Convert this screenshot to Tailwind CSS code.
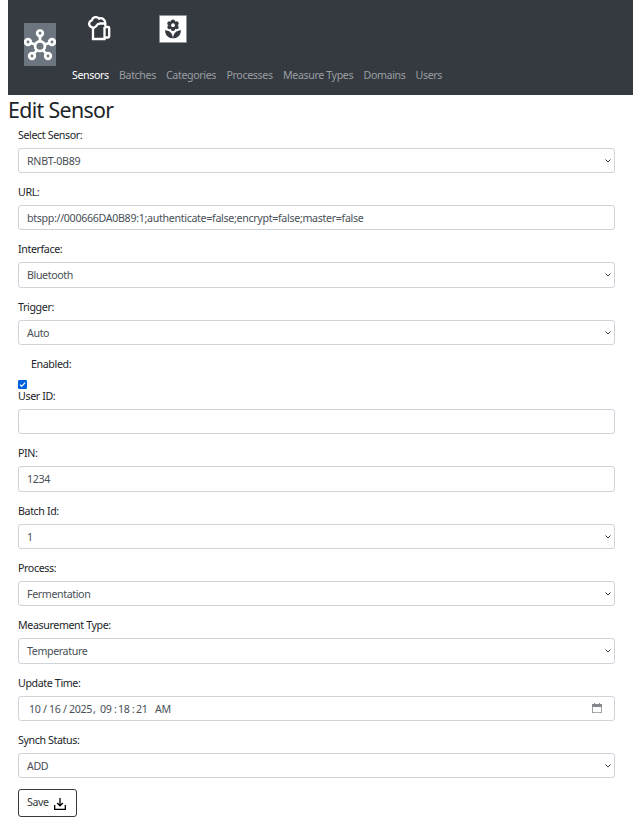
<!DOCTYPE html>
<html lang="en">
<head>
<meta charset="utf-8">
<title>Edit Sensor</title>
<script src="https://cdn.jsdelivr.net/npm/@tailwindcss/browser@4"></script>
</head>
<body class="h-[837px] overflow-hidden bg-white pl-2 font-['Noto_Sans',sans-serif] text-[10.67px] leading-4 tracking-[-0.38px] text-[#212529]">
<header class="flex h-[95px] bg-[#343a40] pl-4">
  <a class="mt-[23px] flex h-[43px] w-8 items-center justify-center bg-[#6c757d]">
    <svg class="h-8 w-8" viewBox="0 0 32 32" fill="none" stroke="#fff" stroke-width="2.7">
      <circle cx="16" cy="17.2" r="4.9"/>
      <circle cx="16" cy="4.3" r="2.8"/><circle cx="4" cy="13" r="2.8"/><circle cx="28" cy="13" r="2.8"/><circle cx="8" cy="27" r="2.8"/><circle cx="24" cy="27" r="2.8"/>
      <path d="M16 7.1v5.2M6.7 13.9l4.8 1.7M25.3 13.9l-4.8 1.7M9.8 24.7l3.3-3.6M22.2 24.7l-3.3-3.6"/>
    </svg>
  </a>
  <div class="ml-4 flex flex-col">
    <div class="flex h-[67px] pt-[15px]">
      <svg class="ml-4 h-[26px] w-[23px]" viewBox="0 0 23 26" fill="none" stroke="#fff" stroke-width="2.3">
        <path d="M5 12.300V24h11.500V12"/>
        <path d="M16.500 12h3.500q1.200 0 1.200 1v8.500q0 1-1.200 1h-3.500"/>
        <path d="M17.300 11.500V8C17.300 4.400 13.800 2.300 11.200 3.600 8.800 1 4.700 2 3.800 5.300.8 6 .200 10 2.800 11.700 5 13.300 7.200 12.500 8.100 11.100 9.100 9.300 10.200 8.600 12 8.500H17.300"/>
      </svg>
      <svg class="ml-[47.500px] h-7 w-7" viewBox="0 0 28 28">
        <path fill="#fff" stroke="#8b9096" stroke-width=".7" d="M.5.500h27v27H.5z"/>
        <g fill="#343a40">
          <circle cx="14" cy="6.700" r="2.200"/><circle cx="10.500" cy="8.400" r="2.200"/><circle cx="17.500" cy="8.400" r="2.200"/><circle cx="10.500" cy="12.100" r="2.200"/><circle cx="17.500" cy="12.100" r="2.200"/><circle cx="14" cy="13.700" r="2.200"/><circle cx="14" cy="10.200" r="3.600"/>
          <path d="M6 15.200c5 .3 7.500 3 8 8.100-5-.2-7.700-3.100-8-8.100zM22 15.200c-5 .3-7.500 3-8 8.100 5-.2 7.700-3.100 8-8.100z"/>
        </g>
        <circle cx="14" cy="10.200" r="1.900" fill="#fff"/>
      </svg>
    </div>
    <nav class="grid grid-cols-[47px_47px_60.5px_56.500px_80.500px_52px_40px] whitespace-nowrap text-[#9a9da0]">
      <a class="text-white">Sensors</a><a>Batches</a><a>Categories</a><a>Processes</a><a>Measure Types</a><a>Domains</a><a>Users</a>
    </nav>
  </div>
</header>
<h1 class="mt-[2px] h-[25px] text-[21.330px] leading-[25px] tracking-[-0.65px]">Edit Sensor</h1>
<form class="flex w-[607px] flex-col pl-[10px]">
  <label class="mt-[5px] h-[20.800px]">Select Sensor:</label>
  <div class="flex h-[25.330px] items-center justify-between rounded-[3px] border border-[#ced4da] pt-px pr-[2px] pl-2 text-[#495057]"><span class="tracking-[-0.27px]">RNBT-0B89</span><svg class="h-2 w-2" viewBox="0 0 8 8" fill="none" stroke="#343a40"><path d="M1.500 2.500 4 5l2.500-2.500"/></svg></div>
  <label class="h-8 pt-[11px]">URL:</label>
  <div class="flex h-[25.330px] items-center rounded-[3px] border border-[#ced4da] pl-2 tracking-[-0.32px] text-[#495057]">btspp://000666DA0B89:1;authenticate=false;encrypt=false;master=false</div>
  <label class="h-8 pt-[11px]">Interface:</label>
  <div class="flex h-[25.330px] items-center justify-between rounded-[3px] border border-[#ced4da] pr-[2px] pl-2 text-[#495057]"><span>Bluetooth</span><svg class="h-2 w-2" viewBox="0 0 8 8" fill="none" stroke="#343a40"><path d="M1.500 2.500 4 5l2.500-2.500"/></svg></div>
  <label class="h-8 pt-[11px]">Trigger:</label>
  <div class="flex h-[25.330px] items-center justify-between rounded-[3px] border border-[#ced4da] pt-px pr-[2px] pl-2 text-[#495057]"><span>Auto</span><svg class="h-2 w-2" viewBox="0 0 8 8" fill="none" stroke="#343a40"><path d="M1.500 2.500 4 5l2.500-2.500"/></svg></div>
  <label class="h-[34.870px] pt-[11px] pl-[13px]">Enabled:</label>
  <svg class="h-[9px] w-[9px]" viewBox="0 0 9 9"><rect width="9" height="9" rx="1.200" fill="#0060df"/><path d="m2 4.700 1.700 1.700L7.100 2.700" fill="none" stroke="#fff" stroke-width="1.200"/></svg>
  <label class="-mt-[1px] h-[21px]">User ID:</label>
  <div class="h-[25.330px] rounded-[3px] border border-[#ced4da]"></div>
  <label class="h-8 pt-[11px]">PIN:</label>
  <div class="flex h-[25.330px] items-center rounded-[3px] border border-[#ced4da] pl-2 text-[#495057]">1234</div>
  <label class="h-8 pt-[11px]">Batch Id:</label>
  <div class="flex h-[25.330px] items-center justify-between rounded-[3px] border border-[#ced4da] pt-px pr-[2px] pl-2 text-[#495057]"><span>1</span><svg class="h-2 w-2" viewBox="0 0 8 8" fill="none" stroke="#343a40"><path d="M1.500 2.500 4 5l2.500-2.500"/></svg></div>
  <label class="h-8 pt-[11px]">Process:</label>
  <div class="flex h-[25.330px] items-center justify-between rounded-[3px] border border-[#ced4da] pr-[2px] pl-2 text-[#495057]"><span>Fermentation</span><svg class="h-2 w-2" viewBox="0 0 8 8" fill="none" stroke="#343a40"><path d="M1.500 2.500 4 5l2.500-2.500"/></svg></div>
  <label class="h-8 pt-[11px]">Measurement Type:</label>
  <div class="flex h-[25.330px] items-center justify-between rounded-[3px] border border-[#ced4da] pr-[2px] pl-2 text-[#495057]"><span>Temperature</span><svg class="h-2 w-2" viewBox="0 0 8 8" fill="none" stroke="#343a40"><path d="M1.500 2.500 4 5l2.500-2.500"/></svg></div>
  <label class="h-8 pt-[11px]">Update Time:</label>
  <div class="flex h-[25.330px] items-center rounded-[3px] border border-[#ced4da] pt-px pr-[12px] pl-[10px] text-[#495057]">
    <span class="w-[14px]">10</span><span class="w-[6px]">/</span><span class="w-[14px]">16</span><span class="w-[6px]">/</span><span class="w-[24px]">2025</span><span class="w-[7px]">,</span><span class="w-[14px]">09</span><span class="w-[4px]">:</span><span class="w-[14px]">18</span><span class="w-[4px]">:</span><span class="w-[19px]">21</span><span>AM</span>
    <svg class="mb-px ml-auto h-[10px] w-[10px]" viewBox="0 0 10 10"><path d="M0 1h2V0h1v1h4V0h1v1h2v9H0z" fill="#85898d"/><path d="M.8 4h8.400v5.300H.8z" fill="#fff"/></svg>
  </div>
  <label class="h-8 pt-[11px]">Synch Status:</label>
  <div class="flex h-[25.330px] items-center justify-between rounded-[3px] border border-[#ced4da] pr-[2px] pl-2 text-[#495057]"><span>ADD</span><svg class="h-2 w-2" viewBox="0 0 8 8" fill="none" stroke="#343a40"><path d="M1.500 2.500 4 5l2.500-2.500"/></svg></div>
  <button type="button" class="mt-[11px] flex h-7 w-[59px] items-start rounded-[3px] border border-[#343a40] pt-[4px] pl-2 text-[#343a40]"><span>Save</span><svg class="mt-[4px] ml-[5px] h-3 w-3" viewBox="0 0 12 12" fill="none" stroke="#000" stroke-width="1.300"><path d="M6 0v7.500M3.200 5 6 7.800 8.800 5M.7 7v4.300h10.600V7"/></svg></button>
</form>
</body>
</html>
